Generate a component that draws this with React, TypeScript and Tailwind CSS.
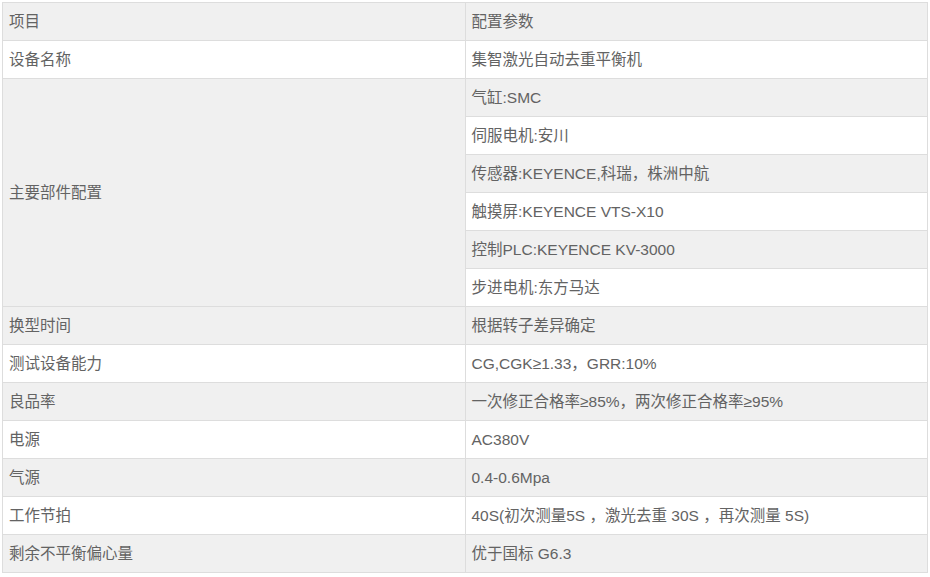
import React from 'react';

const parts = [
    '气缸:SMC',
    '伺服电机:安川',
    '传感器:KEYENCE,科瑞，株洲中航',
    '触摸屏:KEYENCE VTS-X10',
    '控制PLC:KEYENCE KV-3000',
    '步进电机:东方马达',
];

const rest: [string, string][] = [
    ['换型时间', '根据转子差异确定'],
    ['测试设备能力', 'CG,CGK≥1.33，GRR:10%'],
    ['良品率', '一次修正合格率≥85%，两次修正合格率≥95%'],
    ['电源', 'AC380V'],
    ['气源', '0.4-0.6Mpa'],
    ['工作节拍', '40S(初次测量5S ，激光去重 30S ，再次测量 5S)'],
    ['剩余不平衡偏心量', '优于国标 G6.3'],
];

const cell = 'border border-[#dddddd] px-[6px] h-[38px] align-middle text-left font-normal';

const App: React.FC = () => {
    return (
        <div className="min-h-[577px] bg-white pt-[2px] pl-[2px] text-[15.5px] text-[#636363]" style={{ fontFamily: '"Liberation Sans", "Noto Sans CJK SC", sans-serif' }}>
            <table className="w-[926px] table-fixed border-collapse">
                <tbody>
                    <tr className="bg-[#f0f0f0]">
                        <td className={cell}>项目</td>
                        <td className={cell}>配置参数</td>
                    </tr>
                    <tr className="bg-white">
                        <td className={cell}>设备名称</td>
                        <td className={cell}>集智激光自动去重平衡机</td>
                    </tr>
                    {parts.map((p, i) => (
                        <tr key={p} className={i % 2 === 0 ? 'bg-[#f0f0f0]' : 'bg-white'}>
                            {i === 0 && (
                                <td rowSpan={parts.length} className={cell + ' bg-[#f0f0f0]'}>主要部件配置</td>
                            )}
                            <td className={cell}>{p}</td>
                        </tr>
                    ))}
                    {rest.map(([k, v], i) => (
                        <tr key={k} className={i % 2 === 0 ? 'bg-[#f0f0f0]' : 'bg-white'}>
                            <td className={cell}>{k}</td>
                            <td className={cell}>{v}</td>
                        </tr>
                    ))}
                </tbody>
            </table>
        </div>
    );
};

export default App;
